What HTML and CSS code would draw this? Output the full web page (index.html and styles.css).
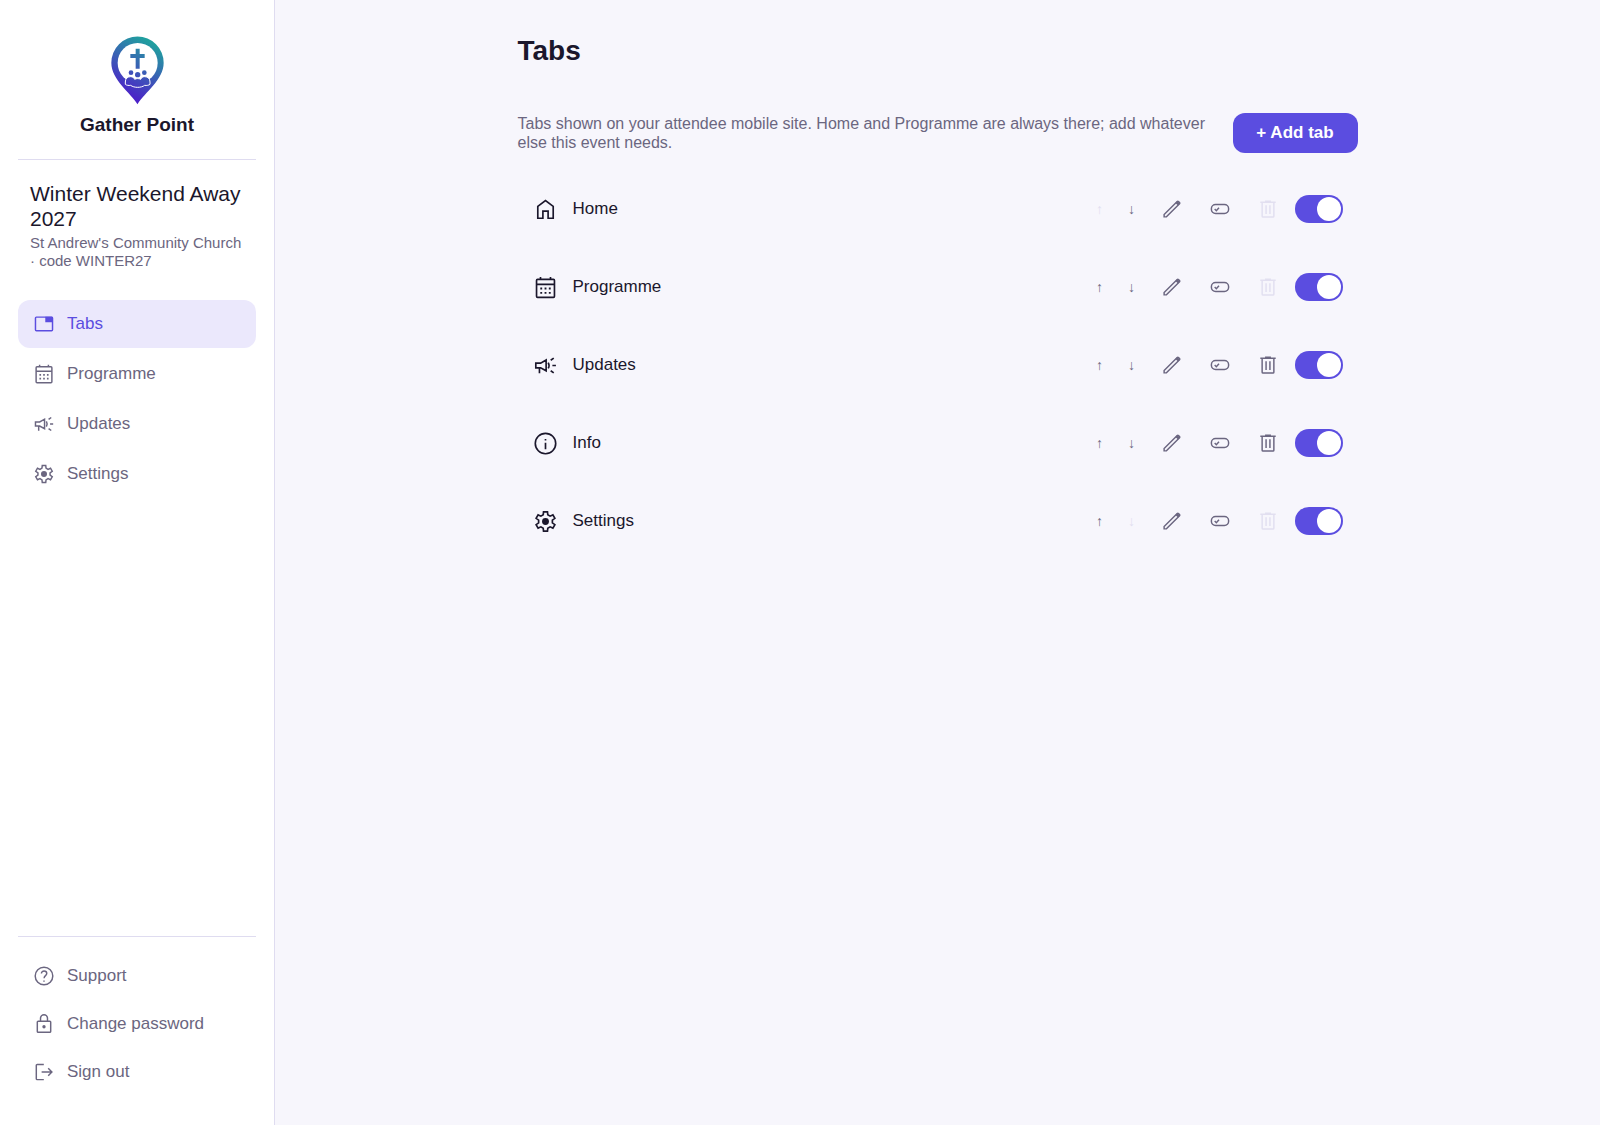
FILE: index.html
```html
<!DOCTYPE html>
<html lang="en">
<head>
    <meta charset="UTF-8">
    <meta name="viewport" content="width=device-width, initial-scale=1">
    <title>Tabs - Gather Point</title>
    <link rel="stylesheet" href="styles.css">
</head>

<body>
    <!-- icon sprite -->
    <svg class="sprite" aria-hidden="true">
        <symbol id="i-tabs" viewBox="0 0 24 24">
            <rect x="2.7" y="4.5" width="18.6" height="14.8" rx="1" />
            <path class="solid" d="M13.4 4h7.6a.8.8 0 0 1 .8.8v5.4h-8.4z" />
        </symbol>
        <symbol id="i-calendar" viewBox="0 0 24 24">
            <rect x="3.4" y="4.2" width="17.2" height="17.3" rx="1" />
            <path d="M3.4 9h17.2M7.2 2v2.2M16.8 2v2.2" />
            <path class="solid" d="M7 12h1.8v1.8H7zM11.1 12h1.8v1.8h-1.8zM15.2 12H17v1.8h-1.8zM7 16.2h1.8V18H7zM11.1 16.2h1.8V18h-1.8zM15.2 16.2H17V18h-1.8z" />
        </symbol>
        <symbol id="i-megaphone" viewBox="0 0 24 24">
            <path d="M2.7 9.7h4.6l5.3-3v10.4l-5.3-2.9H2.7zM6.2 14.2v5.2M14.6 9.2q1.6 2.8 0 5.6M17 7l2.9-2.1M18.6 12H22M17 17l2.9 2.1" />
        </symbol>
        <symbol id="i-settings" viewBox="0 0 24 24">
            <path d="M9.8 5.6l.3-2.9h3.8l.3 2.9 2.2 1.3 2.7-1.2L21 9l-2.4 1.7v2.6L21 15l-1.9 3.3-2.7-1.2-2.2 1.3-.3 2.9h-3.8l-.3-2.9-2.2-1.3-2.7 1.2L3 15l2.4-1.7v-2.6L3 9l1.9-3.3 2.7 1.2z" />
            <circle class="solid" cx="12" cy="12" r="3.3" />
        </symbol>
        <symbol id="i-home" viewBox="0 0 24 24">
            <path d="M4.6 9L12 3.400 19.400 9v11.400h-4.900v-6.900h-5v6.900H4.600z" />
        </symbol>
        <symbol id="i-info" viewBox="0 0 24 24">
            <circle cx="12" cy="12" r="9.8" />
            <path d="M12 11.2v6.2M12 7.6v1.6" />
        </symbol>
        <symbol id="i-help" viewBox="0 0 24 24">
            <circle cx="12" cy="12" r="9.6" />
            <path d="M9.2 9.4c0-1.8 1.2-2.9 2.9-2.9s2.9 1.1 2.9 2.7c0 2.3-2.9 2.5-2.9 5.2M12 16.8v1.6" />
        </symbol>
        <symbol id="i-lock" viewBox="0 0 24 24">
            <rect x="4.7" y="8.9" width="14.6" height="12.2" rx="1" />
            <path d="M8.2 8.9V5.8a3.8 3.8 0 0 1 7.6 0v3.1" />
            <circle class="solid" cx="12" cy="15" r="1.8" />
        </symbol>
        <symbol id="i-signout" viewBox="0 0 24 24">
            <path d="M11.8 3.7H4.6a1 1 0 0 0-1 1v14.6a1 1 0 0 0 1 1h7.2M9.4 12h11.2M16.6 8l4 4-4 4" />
        </symbol>
        <symbol id="i-pencil" viewBox="0 0 24 24">
            <path d="M3.4 20.6v-2.5L17.7 3.8a.9.9 0 0 1 1.3 0l1.200 1.200a.9.9 0 0 1 0 1.300L5.900 20.600z" />
            <path class="solid" d="M15.700 5.400l2.200-2.200 2.900 2.900-2.200 2.200z" />
        </symbol>
        <symbol id="i-pill" viewBox="0 0 24 24">
            <rect x="2.6" y="7.200" width="18.8" height="9.600" rx="4.600" />
            <path d="M6.200 12l1.800 1.800 2.900-3.200" />
        </symbol>
        <symbol id="i-trash" viewBox="0 0 24 24">
            <path d="M3.600 4.600h16.800M8.800 3.400h6.400M5.600 4.600v15.200a1 1 0 0 0 1 1h10.800a1 1 0 0 0 1-1V4.600M9.900 8v9.400M14.100 8v9.400" />
        </symbol>
    </svg>

    <aside class="sidebar">
        <div class="brand">
            <svg class="brand-logo" viewBox="0 0 159 207" aria-hidden="true">
                <defs>
                    <linearGradient id="pin" gradientUnits="userSpaceOnUse" x1="45" y1="175" x2="130" y2="25">
                        <stop offset="0" stop-color="#4b22c8" />
                        <stop offset="0.5" stop-color="#3a5fb5" />
                        <stop offset="1" stop-color="#209f9f" />
                    </linearGradient>
                </defs>
                <path fill="url(#pin)" d="M79.5 205C58 168 1 132 1 80a78.5 78.5 0 0 1 157 0c0 52-57 88-78.5 125z" />
                <circle cx="80" cy="81" r="60" fill="#fff" />
                <path fill="url(#pin)" d="M74 38h12v16h15v12H86v32H74V66H58V54h16z" />
                <path fill="url(#pin)" stroke="#fff" stroke-width="3" d="M43 145v-7c0-10 6-16 16-16 6 0 10 3 12 8 5-3 13-3 18 0 2-5 6-8 12-8 10 0 16 6 16 16v7c-4 3-10 4-16 3-10 8-32 8-42 0-6 1-12 0-16-3z" />
                <g fill="url(#pin)">
                    <circle cx="60" cy="110" r="7" />
                    <circle cx="100" cy="110" r="7" />
                    <circle cx="80" cy="116" r="8" />
                </g>
            </svg>
            <span class="brand-name">Gather Point</span>
        </div>

        <div class="event">
            <div class="event-name">Winter Weekend Away 2027</div>
            <div class="event-meta">St Andrew's Community Church · code WINTER27</div>
        </div>

        <nav class="menu">
            <a class="menu-item active" href="#tabs"><svg class="icon"><use href="#i-tabs" /></svg>Tabs</a>
            <a class="menu-item" href="#programme"><svg class="icon"><use href="#i-calendar" /></svg>Programme</a>
            <a class="menu-item" href="#updates"><svg class="icon"><use href="#i-megaphone" /></svg>Updates</a>
            <a class="menu-item" href="#settings"><svg class="icon"><use href="#i-settings" /></svg>Settings</a>
        </nav>

        <div class="account">
            <a class="menu-item" href="#support"><svg class="icon"><use href="#i-help" /></svg>Support</a>
            <a class="menu-item" href="#password"><svg class="icon"><use href="#i-lock" /></svg>Change password</a>
            <a class="menu-item" href="#signout"><svg class="icon"><use href="#i-signout" /></svg>Sign out</a>
        </div>
    </aside>

    <main class="main">
        <div class="content">
            <h1>Tabs</h1>
            <div class="toolbar">
                <p>Tabs shown on your attendee mobile site. Home and Programme are always there; add whatever else this event needs.</p>
                <button class="add-button" type="button">+ Add tab</button>
            </div>

            <ul class="tab-list">
                <li class="tab-row">
                    <svg class="icon icon-large"><use href="#i-home" /></svg>
                    <span class="tab-name">Home</span>
                    <button class="move" type="button" aria-label="Move Home up" disabled>↑</button>
                    <button class="move" type="button" aria-label="Move Home down">↓</button>
                    <button class="action" type="button" aria-label="Rename Home"><svg class="icon"><use href="#i-pencil" /></svg></button>
                    <button class="action" type="button" aria-label="Home button"><svg class="icon"><use href="#i-pill" /></svg></button>
                    <button class="action" type="button" aria-label="Delete Home" disabled><svg class="icon"><use href="#i-trash" /></svg></button>
                    <input class="switch" type="checkbox" role="switch" aria-label="Show Home" checked>
                </li>
                <li class="tab-row">
                    <svg class="icon icon-large"><use href="#i-calendar" /></svg>
                    <span class="tab-name">Programme</span>
                    <button class="move" type="button" aria-label="Move Programme up">↑</button>
                    <button class="move" type="button" aria-label="Move Programme down">↓</button>
                    <button class="action" type="button" aria-label="Rename Programme"><svg class="icon"><use href="#i-pencil" /></svg></button>
                    <button class="action" type="button" aria-label="Programme button"><svg class="icon"><use href="#i-pill" /></svg></button>
                    <button class="action" type="button" aria-label="Delete Programme" disabled><svg class="icon"><use href="#i-trash" /></svg></button>
                    <input class="switch" type="checkbox" role="switch" aria-label="Show Programme" checked>
                </li>
                <li class="tab-row">
                    <svg class="icon icon-large"><use href="#i-megaphone" /></svg>
                    <span class="tab-name">Updates</span>
                    <button class="move" type="button" aria-label="Move Updates up">↑</button>
                    <button class="move" type="button" aria-label="Move Updates down">↓</button>
                    <button class="action" type="button" aria-label="Rename Updates"><svg class="icon"><use href="#i-pencil" /></svg></button>
                    <button class="action" type="button" aria-label="Updates button"><svg class="icon"><use href="#i-pill" /></svg></button>
                    <button class="action" type="button" aria-label="Delete Updates"><svg class="icon"><use href="#i-trash" /></svg></button>
                    <input class="switch" type="checkbox" role="switch" aria-label="Show Updates" checked>
                </li>
                <li class="tab-row">
                    <svg class="icon icon-large"><use href="#i-info" /></svg>
                    <span class="tab-name">Info</span>
                    <button class="move" type="button" aria-label="Move Info up">↑</button>
                    <button class="move" type="button" aria-label="Move Info down">↓</button>
                    <button class="action" type="button" aria-label="Rename Info"><svg class="icon"><use href="#i-pencil" /></svg></button>
                    <button class="action" type="button" aria-label="Info button"><svg class="icon"><use href="#i-pill" /></svg></button>
                    <button class="action" type="button" aria-label="Delete Info"><svg class="icon"><use href="#i-trash" /></svg></button>
                    <input class="switch" type="checkbox" role="switch" aria-label="Show Info" checked>
                </li>
                <li class="tab-row">
                    <svg class="icon icon-large"><use href="#i-settings" /></svg>
                    <span class="tab-name">Settings</span>
                    <button class="move" type="button" aria-label="Move Settings up">↑</button>
                    <button class="move" type="button" aria-label="Move Settings down" disabled>↓</button>
                    <button class="action" type="button" aria-label="Rename Settings"><svg class="icon"><use href="#i-pencil" /></svg></button>
                    <button class="action" type="button" aria-label="Settings button"><svg class="icon"><use href="#i-pill" /></svg></button>
                    <button class="action" type="button" aria-label="Delete Settings" disabled><svg class="icon"><use href="#i-trash" /></svg></button>
                    <input class="switch" type="checkbox" role="switch" aria-label="Show Settings" checked>
                </li>
            </ul>
        </div>
    </main>
</body>
</html>
```
FILE: styles.css
```css
* {
    box-sizing: border-box;
}

body {
    margin: 0;
    min-height: 100vh;
    display: flex;
    background-color: #f7f6fc;
    color: #1b172c;
    font-family: "Liberation Sans", Arial, sans-serif;
    font-size: 17px;
}

button {
    border: none;
    background: none;
    padding: 0;
    color: inherit;
    font-family: inherit;
    cursor: pointer;
}

.sprite {
    display: none;
}

.icon {
    width: 22px;
    height: 22px;
    flex: none;
    fill: none;
    stroke: currentColor;
    stroke-width: 1.6;
}

.icon-large {
    width: 25px;
    height: 25px;
}

.solid {
    fill: currentColor;
    stroke: none;
}

/* sidebar */

.sidebar {
    width: 275px;
    flex: none;
    display: flex;
    flex-direction: column;
    padding: 36px 18px 29px;
    background-color: white;
    border-right: 1px solid #dfdcf0;
}

.brand {
    display: flex;
    flex-direction: column;
    align-items: center;
    gap: 9px;
    padding-bottom: 23px;
    border-bottom: 1px solid #dfdcf0;
}

.brand-logo {
    width: 53px;
    height: 69px;
}

.brand-name {
    font-size: 19px;
    font-weight: bold;
    line-height: 22px;
}

.event {
    padding: 21px 12px 30px;
}

.event-name {
    font-size: 21px;
    line-height: 25px;
}

.event-meta {
    margin-top: 3px;
    color: #6b6680;
    font-size: 15px;
    line-height: 18px;
}

.menu {
    display: flex;
    flex-direction: column;
    gap: 2px;
}

.menu-item {
    display: flex;
    align-items: center;
    gap: 12px;
    height: 48px;
    padding: 0 15px;
    border-radius: 12px;
    color: #6b6680;
    text-decoration: none;
}

.menu-item.active {
    background-color: #ebe8fc;
    color: #5b4de0;
}

.account {
    margin-top: auto;
    padding-top: 15px;
    border-top: 1px solid #dfdcf0;
}

/* main */

.main {
    flex: 1;
    padding: 35px 20px;
}

.content {
    max-width: 840px;
    margin: 0 auto;
}

h1 {
    margin: 0 0 46px;
    font-size: 28px;
    line-height: 32px;
}

.toolbar {
    display: flex;
    align-items: center;
    gap: 17px;
    margin-bottom: 17px;
}

.toolbar p {
    flex: 1;
    margin: 0;
    color: #6b6680;
    font-size: 16px;
    line-height: 19px;
}

.add-button {
    width: 125px;
    height: 40px;
    border-radius: 12px;
    background-color: #5b4de0;
    color: white;
    font-size: 17px;
    font-weight: bold;
}

.tab-list {
    margin: 0;
    padding: 0;
    list-style: none;
}

.tab-row {
    display: flex;
    align-items: center;
    height: 78px;
    padding: 0 15px;
}

.tab-name {
    flex: 1;
    margin-left: 15px;
}

.move {
    width: 32px;
    height: 32px;
    color: #6b6680;
    font-size: 14px;
}

.action {
    display: flex;
    align-items: center;
    justify-content: center;
    width: 48px;
    height: 48px;
    color: #6b6680;
}

.move:disabled,
.action:disabled {
    color: #e2dff0;
    cursor: default;
}

.switch {
    appearance: none;
    display: flex;
    width: 48px;
    height: 28px;
    margin: 0 0 0 3px;
    padding: 2px;
    border-radius: 14px;
    background-color: #cfcbe0;
    cursor: pointer;
}

.switch::before {
    content: "";
    width: 24px;
    height: 24px;
    border-radius: 50%;
    background-color: white;
}

.switch:checked {
    justify-content: flex-end;
    background-color: #5b4de0;
}
```
